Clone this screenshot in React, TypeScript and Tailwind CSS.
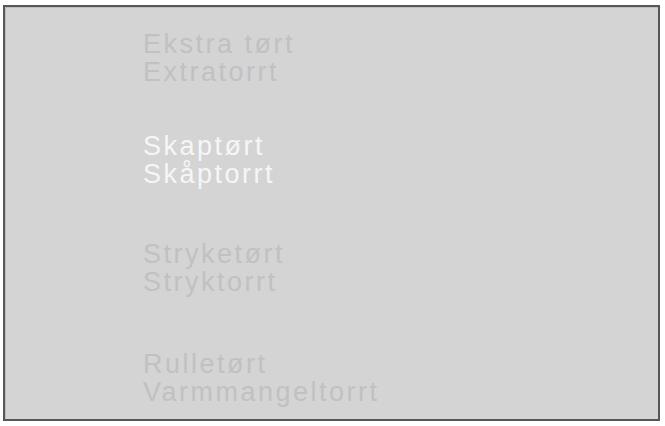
const programs = [
  { no: 'Ekstra tørt', se: 'Extratorrt', active: false, mt: 'mt-[23px]' },
  { no: 'Skaptørt', se: 'Skåptorrt', active: true, mt: 'mt-[46px]' },
  { no: 'Stryketørt', se: 'Stryktorrt', active: false, mt: 'mt-[52px]' },
  { no: 'Rulletørt', se: 'Varmmangeltorrt', active: false, mt: 'mt-[54px]' },
];

export default function App() {
  return (
    <div className="w-[665px] h-[426px] bg-white pt-[5px] pl-[3px] overflow-hidden">
      <div className="w-[657px] h-[416px] border-2 border-[#575757] bg-[#d4d4d4] shadow-[inset_1px_1px_0_#bdbdbd] pl-[138px] font-['Liberation_Sans',Arial,sans-serif]">
        {programs.map((p) => (
          <div
            key={p.no}
            className={`${p.mt} text-[27px] leading-[28px] tracking-[2.5px] ${
              p.active ? 'text-[#f6f6f6]' : 'text-[#c1c1c1]'
            }`}
          >
            <div>{p.no}</div>
            <div>{p.se}</div>
          </div>
        ))}
      </div>
    </div>
  );
}
